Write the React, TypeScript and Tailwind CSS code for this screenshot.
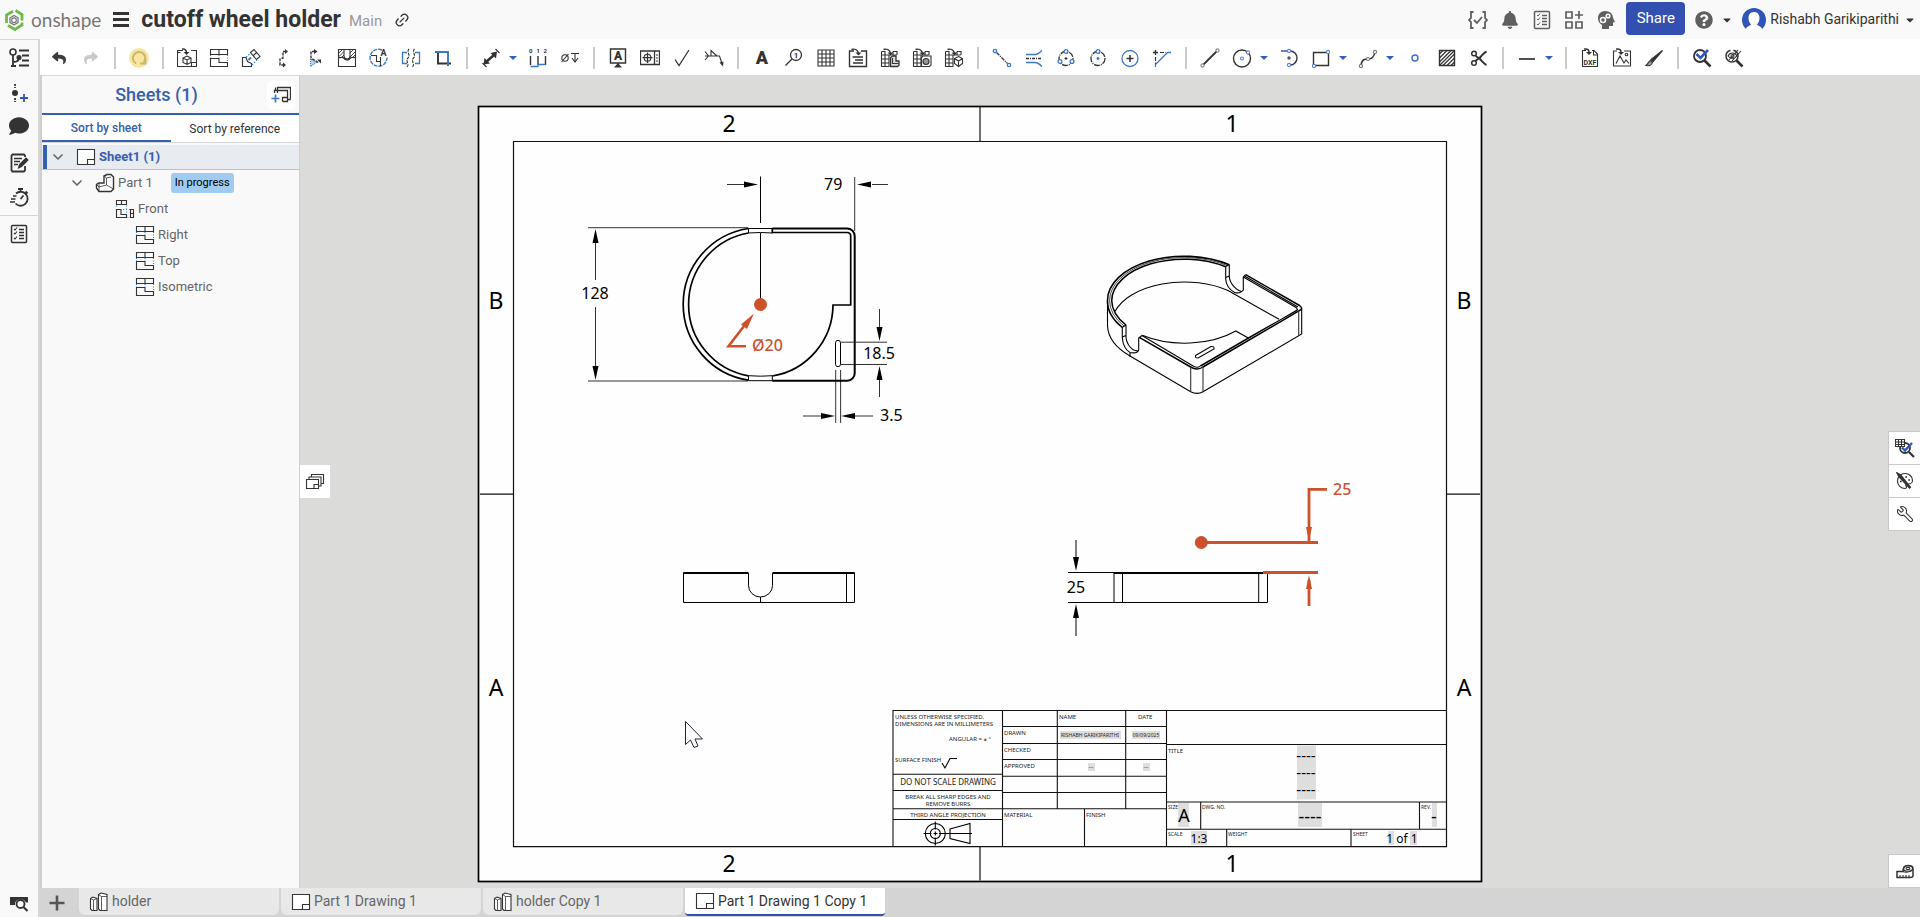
import type { ReactNode } from 'react';
import { FaBell, FaCaretDown, FaComment, FaQuestionCircle, FaReply, FaShare } from 'react-icons/fa';
import { ChevronDown, Link2, Palette, Wrench } from 'lucide-react';

const INK = '#333333';
const BLUE = '#3b78c4';
const ORANGE = '#cb522c';

/* ---------- icons ---------- */

function Icon({ children, className = 'size-5' }: { children: ReactNode; className?: string }) {
  return (
    <svg viewBox="0 0 20 20" className={className} fill="none" stroke={INK} strokeWidth="1.1" aria-hidden="true">
      {children}
    </svg>
  );
}

const projectedView = (
  <>
    <path d="M1.5 1.5h17v5h-17zM10 1.5v5M1.5 10.5H10v4h8.5v4h-17z" />
    <path d="M1.5 7v3M10 7v3M18.5 7v7" stroke={BLUE} strokeDasharray="1 1.5" />
  </>
);

const sheetIcon = (
  <>
    <path d="M1.5 2.5h17v15h-17z" fill="#fff" />
    <path d="M11.5 17.5v-5h7" />
  </>
);

const gridIcon = <path d="M2 2h16v16H2zM2 6h16M2 10h16M2 14h16M6 2v16M10 2v16M14 2v16" />;

const importArrow = <path d="M3.5 1.5c3-1 6 .5 7 3.5" strokeWidth="1.5" />;
const importHead = <path d="M7.5 4.5h6l-3 3z" fill={INK} stroke="none" />;

const tableImport = (
  <>
    <path d="M1.5 3.5v15h8M1.5 7h15M1.5 11h7M1.5 15h7M5 3.500v15M9 7v11M1.5 3.5h4M13 3.5h4v3.5M13 3.500v3.500" />
    {importArrow}
    {importHead}
  </>
);

const partStudio = (
  <>
    <path d="M1.5 6.5 4 5l4 1.5v12h-5l-1.5-1.5z" fill="#fff" />
    <path d="M4.5 8v10.5M1.5 6.5l3 1.5 3.500-1.5" strokeWidth=".8" />
    <path d="M9.5 2.5 12 1l6 1.5v16h-7L9.500 17z" fill="#fff" />
    <path d="m9.5 2.5 3 2h5.500M12.500 4.500v14" strokeWidth=".8" />
  </>
);

const checklist = (
  <>
    <rect x="2.5" y="1.5" width="15" height="17" rx="1" strokeWidth="1.5" />
    <path d="M10 5.5h5M10 8.5h5M10 11.5h5M10 14.5h5" strokeWidth="1.5" />
    <path d="m5 5 1 1 2-2.5M5 9l1 1 2-2.500M5 14l1 1 2-2.500" />
  </>
);

const magnifierCheck = (
  <>
    <circle cx="8" cy="8" r="6" strokeWidth="1.8" />
    <path d="m12.5 12.5 6 6" strokeWidth="2.6" />
    <path d="m4.5 6 4 4 7.500-8" stroke="#2f55c0" strokeWidth="2.6" />
  </>
);

type Tool = { id: string; label: string; icon: ReactNode; menu?: boolean };

const toolGroups: Tool[][] = [
  [
    { id: 'undo', label: 'Undo', icon: <FaReply className="size-[14px] text-[#3a3a3a]" /> },
    { id: 'redo', label: 'Redo', icon: <FaShare className="size-[14px] text-[#c9c9c9]" /> },
  ],
  [
    {
      id: 'update',
      label: 'Update views',
      icon: (
        <Icon>
          <circle cx="10" cy="10" r="10" fill="#f8e6a0" stroke="none" />
          <path d="M7 15.500A6.200 6.200 0 1 1 14.500 14.500" stroke="#c9b673" strokeWidth="2" />
          <path d="M11 15.500h5.500v-5" stroke="#c9b673" strokeWidth="1.8" />
        </Icon>
      ),
    },
  ],
  [
    {
      id: 'insert-view',
      label: 'Insert view',
      icon: (
        <Icon>
          <path d="M6 2.500H.5v16h19v-16H14M14.500 18.500v-4h5M.5 4.500h3" />
          <path d="M10 8l4 2v4.500l-4 2-4-2V10zM6 10l4 2 4-2M10 12v4.500" />
          <path d="M5 1c3-.5 4.500 1 4.500 4" strokeWidth="1.5" />
          <path d="M6.500 4h6L9.500 7z" fill={INK} stroke="none" />
        </Icon>
      ),
    },
    { id: 'projected', label: 'Projected view', icon: <Icon>{projectedView}</Icon> },
    {
      id: 'auxiliary',
      label: 'Auxiliary view',
      icon: (
        <Icon>
          <path d="M1.500 9.500v9h9v-3l-4-2-1.500-4zM9.500 4.500 13 1.500l6 7-3.500 3zM12.500 7.500l3-3" />
          <path d="m5 9 5-4M11 17l5-5" stroke={BLUE} strokeDasharray="1.5 1.5" />
          <path d="m7.500 12 2.500-2.500" stroke={BLUE} strokeWidth="2" />
        </Icon>
      ),
    },
    {
      id: 'section',
      label: 'Section view',
      icon: (
        <Icon>
          <path d="M13 3.500h-3V10l-3 1v6h4" strokeDasharray="3 1" strokeWidth="1.4" />
          <path d="m12 1 3 2.500-3 2.500zM10 14.500l3 2.500-3 2.500z" fill={INK} stroke="none" />
        </Icon>
      ),
    },
    {
      id: 'aligned-section',
      label: 'Aligned section view',
      icon: (
        <Icon>
          <path d="M10 3.500H6V10l8 5" strokeDasharray="3 1" strokeWidth="1.4" />
          <path d="m9 1 3.500 2.500L9 6zM12 11.500h4v4z" fill={INK} stroke="none" />
          <path d="M5.500 11v7.500l6-4z" fill={BLUE} fillOpacity=".35" stroke={BLUE} strokeDasharray="1 1" />
        </Icon>
      ),
    },
    {
      id: 'broken-out',
      label: 'Broken-out section view',
      icon: (
        <Icon>
          <path d="M1.500 1.500h17v17h-17z" />
          <path d="M7 1.500V8c0 4 6 4 6 0V1.500M1.500 9c2 2 3-1 5 1 2 3 5 3 7 0 2-2 3 1 5-1" />
          <path d="m2 5 3-3M2 8.500 7 3.500M4 10l3-3M13 5l3-3M13 9l5-5M15 10l3.500-3.500M8 12l1.500-1.500M11 12.500l2-2" strokeWidth=".9" />
        </Icon>
      ),
    },
    {
      id: 'detail',
      label: 'Detail view',
      icon: (
        <Icon>
          <path d="M13 2a8.500 8.500 0 1 0 5 7.500" stroke={BLUE} strokeWidth="1.4" strokeDasharray="4 1" />
          <path d="M2 7.500h5.500v6h4V18M11.500 9v5" />
          <text x="11.500" y="8" fontSize="9" fontWeight="700" fill={INK} stroke="none">A</text>
        </Icon>
      ),
    },
    {
      id: 'break',
      label: 'Break view',
      icon: (
        <Icon>
          <path d="M6 4.500H1.500v11H6M14 4.500h4.500v11H14" stroke={BLUE} strokeWidth="1.3" />
          <path d="M8 1c-3 3 2 6-1 9s2 6-1 9M13.500 1c-3 3 2 6-1 9s2 6-1 9" strokeDasharray="3 1" />
        </Icon>
      ),
    },
    {
      id: 'crop',
      label: 'Crop view',
      icon: (
        <Icon>
          <path d="M5 4v11.500h13" strokeWidth="1.9" />
          <path d="M2 4h13v14" stroke={BLUE} strokeWidth="1.9" />
        </Icon>
      ),
    },
  ],
  [
    {
      id: 'dimension',
      label: 'Dimension',
      menu: true,
      icon: (
        <Icon>
          <path d="m5 14 8-7" strokeWidth="2.6" />
          <path d="M2.500 16.500 3.500 10l5.500 5.500zM16 3.500 9.500 5l5.500 5.500z" fill={INK} stroke="none" />
          <path d="m1.500 15 4 4M14.500 1l4 4" />
        </Icon>
      ),
    },
    {
      id: 'ordinate',
      label: 'Ordinate dimension',
      icon: (
        <Icon>
          <path d="M2.500 8v9M10 8v9M17.500 8v9" strokeWidth="1.4" />
          <path d="M2.500 18.500H10v-2h7.500" stroke={BLUE} strokeWidth="1.3" />
          <g fontSize="6" fontWeight="700" fill={INK} stroke="none">
            <text x="1" y="5">0</text>
            <text x="8.500" y="5">1</text>
            <text x="15.500" y="5">2</text>
          </g>
        </Icon>
      ),
    },
    {
      id: 'hole',
      label: 'Hole callout',
      icon: (
        <Icon>
          <circle cx="5" cy="10" r="3.2" />
          <path d="m1.500 14 7-8M11 5.500h8M15 5.500v8" />
          <path d="m12 10 3 4 3-4" />
        </Icon>
      ),
    },
  ],
  [
    {
      id: 'note-datum',
      label: 'Datum',
      icon: (
        <Icon>
          <path d="M2.500 1h15v14h-15zM10 15v3" strokeWidth="1.4" />
          <path d="m10 15 4 4.500H6z" fill={INK} stroke="none" />
          <text x="10" y="12" fontSize="12" fontWeight="900" textAnchor="middle" fill={INK} stroke="none">A</text>
        </Icon>
      ),
    },
    {
      id: 'tolerance',
      label: 'Geometric tolerance',
      icon: (
        <Icon>
          <path d="M.5 3h19v13.500H.5zM14.500 3v13.500M2.500 9.700h10M7.500 4.500v10.500" strokeWidth="1.3" />
          <circle cx="7.500" cy="9.700" r="3.400" />
          <path d="M16 7h2M16 10h2M16 13h2" />
        </Icon>
      ),
    },
    { id: 'surface', label: 'Surface finish symbol', icon: <Icon><path d="m3 11.500 4 6L17 2" strokeWidth="1.3" /></Icon> },
    {
      id: 'weld',
      label: 'Weld symbol',
      icon: (
        <Icon>
          <path d="M1 8h14.500l3 9M1 3.500 4.500 8 1 12M7 8V2.500l6 5.500" />
          <path d="m15.500 14.500 4-1-.5 5z" fill={INK} stroke="none" />
        </Icon>
      ),
    },
  ],
  [
    { id: 'note', label: 'Note', icon: <Icon><text x="10" y="16" fontSize="18" fontWeight="900" textAnchor="middle" fill={INK} stroke="none">A</text></Icon> },
    {
      id: 'balloon',
      label: 'Callout',
      icon: (
        <Icon>
          <circle cx="12" cy="7" r="5.500" strokeWidth="1.3" />
          <path d="m8 11-6.500 6.500" strokeWidth="1.3" />
          <text x="12" y="10" fontSize="8" fontWeight="700" textAnchor="middle" fill={INK} stroke="none">1</text>
        </Icon>
      ),
    },
    { id: 'table', label: 'Table', icon: <Icon>{gridIcon}</Icon> },
    {
      id: 'bom',
      label: 'Bill of materials',
      icon: (
        <Icon>
          <path d="M6 3H1.500v15.500h17V3H13" strokeWidth="1.4" />
          <path d="M4.500 9h4M7 12h8M7 9h8M5 15h10" strokeWidth="1.7" />
          {importArrow}
          {importHead}
        </Icon>
      ),
    },
    {
      id: 'cutlist',
      label: 'Cut list',
      icon: (
        <Icon>
          {tableImport}
          <path d="M10.500 9.500 13 8h3v5h3v4.500l-1.500 1h-7z" fill="#ddd" strokeWidth="1.3" />
          <path d="M12.500 10v5.500h6" />
        </Icon>
      ),
    },
    {
      id: 'hole-table',
      label: 'Hole table',
      icon: (
        <Icon>
          {tableImport}
          <path d="M9.500 9.500 11 8h8v9l-1.500 1.500h-8z" fill="#fff" />
          <circle cx="14" cy="13.500" r="3" fill="#999" />
        </Icon>
      ),
    },
    {
      id: 'revision-table',
      label: 'Revision table',
      icon: (
        <Icon>
          {tableImport}
          <path d="m14.500 8.500 4 2v5l-4 3-4-3v-5zM10.500 10.500l4 2.500 4-2.500M14.500 13v5" fill="#fff" />
        </Icon>
      ),
    },
  ],
  [
    {
      id: 'centerline-points',
      label: 'Centerline between points',
      icon: (
        <Icon>
          <path d="m4.500 4.500 11 11" strokeDasharray="4 1 1 1" strokeWidth="1.3" />
          <g stroke={BLUE} strokeWidth="1.3"><circle cx="3" cy="3" r="1.7" /><circle cx="17" cy="17" r="1.7" /></g>
        </Icon>
      ),
    },
    {
      id: 'centerline-edges',
      label: 'Centerline between edges',
      icon: (
        <Icon>
          <path d="M2 10.500h16" strokeDasharray="3 1 1 1" strokeWidth="1.3" />
          <path d="M2 6.500h9c3 0 5-2 7-4M2 14.500h9c3 0 5 2 7 4" stroke={BLUE} strokeWidth="1.3" />
        </Icon>
      ),
    },
    {
      id: 'three-point',
      label: '3 point circular centerline',
      icon: (
        <Icon>
          <circle cx="10" cy="10.500" r="7" strokeWidth="1.3" strokeDasharray="6 1 1 1" />
          <path d="M8.500 10.500h3M10 9v3" />
          <g stroke={BLUE} strokeWidth="1.3" fill="#fff"><circle cx="10" cy="3.500" r="1.9" /><circle cx="4" cy="13.500" r="1.9" /><circle cx="16" cy="13.500" r="1.9" /></g>
        </Icon>
      ),
    },
    {
      id: 'two-point',
      label: '2 point circular centerline',
      icon: (
        <Icon>
          <circle cx="10" cy="10.500" r="7" strokeWidth="1.3" strokeDasharray="6 1 1 1" />
          <path d="M8.500 10.500h3M10 9v3" stroke={BLUE} strokeWidth="1.5" />
          <circle cx="10" cy="3.500" r="1.9" stroke={BLUE} strokeWidth="1.3" fill="#fff" />
        </Icon>
      ),
    },
    {
      id: 'centermark',
      label: 'Centermark',
      icon: (
        <Icon>
          <circle cx="10" cy="10.500" r="8" stroke={BLUE} strokeWidth="1.3" />
          <path d="M6.500 10.500h7M10 7v7" strokeWidth="1.5" />
        </Icon>
      ),
    },
    {
      id: 'virtual-sharp',
      label: 'Virtual sharp',
      icon: (
        <Icon>
          <path d="M1 4.500h5M3.500 2v5" strokeWidth="1.4" />
          <path d="M8 4.500h6M3.500 9v7" strokeDasharray="4 1.5" />
          <path d="M3.500 19v-2.500l12-12H19" stroke={BLUE} strokeWidth="1.3" />
        </Icon>
      ),
    },
  ],
  [
    {
      id: 'line',
      label: 'Line',
      icon: (
        <Icon>
          <path d="m3.500 16.500 13-13" strokeWidth="1.8" />
          <g fill="#fff" stroke="#888"><circle cx="2.500" cy="17.500" r="1.6" /><circle cx="17.500" cy="2.500" r="1.6" /></g>
        </Icon>
      ),
    },
    {
      id: 'circle',
      label: 'Circle',
      menu: true,
      icon: (
        <Icon>
          <circle cx="10" cy="10.500" r="8.500" strokeWidth="1.4" />
          <g stroke="#5a7fd6" fill="#fff"><circle cx="10" cy="10.500" r="1.5" /><circle cx="16" cy="4.500" r="1.6" /></g>
        </Icon>
      ),
    },
    {
      id: 'arc',
      label: 'Tangent arc',
      icon: (
        <Icon>
          <path d="M11 3a7 7 0 0 1 0 14" strokeWidth="1.4" />
          <path d="M2 3h7" stroke="#2f55c0" strokeWidth="1.5" />
          <circle cx="10" cy="10" r="1.7" fill="#555" stroke="none" />
          <g stroke="#5a7fd6" fill="#fff"><circle cx="10" cy="3" r="1.6" /><circle cx="10" cy="17" r="1.6" /></g>
        </Icon>
      ),
    },
    {
      id: 'rectangle',
      label: 'Corner rectangle',
      menu: true,
      icon: (
        <Icon>
          <path d="M2.500 4.500h15v13h-15z" strokeWidth="1.4" />
          <g stroke="#5a7fd6" fill="#fff"><circle cx="17" cy="4" r="1.6" /><circle cx="3" cy="18" r="1.6" /></g>
        </Icon>
      ),
    },
    {
      id: 'spline',
      label: 'Spline',
      menu: true,
      icon: (
        <Icon>
          <path d="M3 17c1-6 4-6 7-6s6-1 7-7" strokeWidth="1.5" />
          <g fill="#fff" stroke="#777"><circle cx="3" cy="18" r="1.6" /><circle cx="10" cy="11" r="1.5" /><circle cx="17" cy="4" r="1.6" /></g>
        </Icon>
      ),
    },
    { id: 'point', label: 'Point', icon: <Icon><circle cx="10" cy="10" r="3" stroke="#3f6bc9" strokeWidth="1.4" /></Icon> },
    {
      id: 'hatch',
      label: 'Hatch',
      icon: (
        <Icon>
          <path d="M2.500 2.500h15v15h-15z" strokeWidth="1.4" />
          <path d="m2.500 6 3.500-3.500M2.500 10l7.500-7.500M2.500 14 14 2.500M2.500 17.500l15-15M6 17.500 17.500 6M10 17.500l7.500-7.500M14 17.500l3.500-3.500" strokeWidth="1.2" />
        </Icon>
      ),
    },
    {
      id: 'trim',
      label: 'Trim',
      icon: (
        <Icon>
          <path d="M6.500 7.500c1.500 2 3 2 4.500 3.500 2 2 4 5 6.500 6M6.500 13c1.500-2 3-2 4.500-3.500 2-2 4-5 6.500-6" strokeWidth="2" />
          <circle cx="5" cy="5.500" r="2.300" strokeWidth="1.5" />
          <circle cx="5" cy="15" r="2.300" strokeWidth="1.5" />
        </Icon>
      ),
    },
  ],
  [{ id: 'line-style', label: 'Line style', menu: true, icon: <Icon><path d="M2 11h16" strokeWidth="1.7" /></Icon> }],
  [
    {
      id: 'dxf',
      label: 'Insert DXF',
      icon: (
        <Icon>
          <path d="M6 2.500H2.500v16h15V6L14 2.500h-2M13.500 2.500V7h4" />
          <path d="M4 1c4-.5 5 1 5 3" strokeWidth="1.5" />
          <path d="M6 4h6L9 7z" fill={INK} stroke="none" />
          <text x="10" y="17" fontSize="7" fontWeight="700" textAnchor="middle" fill={INK} stroke="none">DXF</text>
        </Icon>
      ),
    },
    {
      id: 'image',
      label: 'Insert image',
      icon: (
        <Icon>
          <path d="M5 3H1.500v15h17V3H12M4 15.500 8 8l4 7 2-3 3 3.500" />
          <circle cx="14.500" cy="6.500" r="1.3" />
          <path d="M4 1c4-.5 5 1 5 3" strokeWidth="1.5" />
          <path d="M6 4h6L9 7z" fill={INK} stroke="none" />
        </Icon>
      ),
    },
    {
      id: 'format',
      label: 'Format painter',
      icon: (
        <Icon>
          <path d="M18.500 2.500 9 13.500 7 11.500z" fill={INK} strokeWidth="1.2" />
          <path d="M6.500 12.500c-2 .5-2 3-4.500 5 3 .5 6-.5 6.500-3z" fill="#999" />
        </Icon>
      ),
    },
  ],
  [
    { id: 'inspect', label: 'Show dangling annotations', icon: <Icon>{magnifierCheck}</Icon> },
    {
      id: 'hide',
      label: 'Hide annotations',
      icon: (
        <Icon>
          <circle cx="8" cy="8" r="6" strokeWidth="1.5" strokeDasharray="26 3" />
          <path d="m12.500 12.500 6 6" strokeWidth="2.6" />
          <path d="M4 8c2-4 7-4 9 0-2 3-7 3-9 0zM5 12 14 2M8 13l9-10" />
          <circle cx="8.500" cy="8" r="1.5" />
        </Icon>
      ),
    },
  ],
];

/* ---------- header and bars ---------- */

function Header() {
  return (
    <header className="flex h-[39px] shrink-0 items-center bg-[#f9f9f9] pr-1 pl-1 text-[#333]">
      <a href="#home" aria-label="onshape" className="flex items-center gap-[7px] text-[#757575]">
        <svg viewBox="0 0 20 22" className="h-[22px] w-5" fill="none" aria-hidden="true">
          <path d="M9 2.200 2.500 6v8M11.500 1.500 18 5.500v6M18 13.500V16l-7 4.500-7-4" stroke="#6cbb45" strokeWidth="2.8" />
          <path d="m10 6.500 4 2.300v4.700l-4 2.300-4-2.300V8.800z" stroke="#777" strokeWidth="1.3" />
          <circle cx="10" cy="11.200" r="2.300" stroke="#777" strokeWidth="1.1" />
        </svg>
        <span className="font-[Lato] text-[19px] leading-6">onshape</span>
      </a>
      <button aria-label="Document menu" className="ml-3 flex w-4 flex-col gap-[3px]">
        <span className="h-[3px] bg-[#333]" />
        <span className="h-[3px] bg-[#333]" />
        <span className="h-[3px] bg-[#333]" />
      </button>
      <h1 className="ml-3 text-[23px] leading-6 font-bold">cutoff wheel holder</h1>
      <span className="ml-2 pt-1 text-[15px] text-[#999]">Main</span>
      <button aria-label="Copy link" className="ml-3">
        <Link2 className="size-4 -rotate-45" />
      </button>

      <div className="ml-auto flex items-center">
        <button aria-label="Custom features" className="flex w-8 justify-center">
          <svg viewBox="0 0 20 20" className="size-5" fill="none" stroke="#5f5f5f" strokeWidth="1.8" aria-hidden="true">
            <path d="M5.500 2H3v6l-2 2 2 2v6h2.500M14.500 2H17v6l2 2-2 2v6h-2.500M6 10l3 3 5-6" />
          </svg>
        </button>
        <button aria-label="Notifications" className="flex w-8 justify-center">
          <FaBell className="size-[18px] text-[#5f5f5f]" />
        </button>
        <button aria-label="Action items" className="flex w-8 justify-center">
          <svg viewBox="0 0 20 20" className="size-5" fill="none" stroke="#5f5f5f" aria-hidden="true">
            <rect x="2.500" y="1.500" width="15" height="17" rx="1" strokeWidth="1.5" />
            <path d="M10 5.500h5M10 8.500h5M10 11.500h5M10 14.500h5" strokeWidth="1.5" />
            <path d="m5 5 1 1 2-2.500M5 9l1 1 2-2.500M5 14l1 1 2-2.500" />
          </svg>
        </button>
        <button aria-label="App store" className="flex w-8 justify-center">
          <svg viewBox="0 0 20 20" className="size-5" fill="none" stroke="#5f5f5f" strokeWidth="1.7" aria-hidden="true">
            <path d="M2 2h6v6H2zM2 12h6v6H2zM12 12h6v6h-6zM15 1v8M11 5h8" />
          </svg>
        </button>
        <button aria-label="Learning center" className="flex w-8 justify-center">
          <svg viewBox="0 0 20 20" className="size-5" aria-hidden="true">
            <path d="M9 1c5 0 8 3 8 7l2 4-2 .5V16h-4v3H6v-4c-3-2-4-4-4-7 0-4 3-7 7-7z" fill="#5f5f5f" />
            <g fill="none" stroke="#f9f9f9" strokeWidth="1.6">
              <circle cx="7" cy="10" r="2.500" />
              <circle cx="12" cy="6" r="1.800" />
            </g>
          </svg>
        </button>
        <button className="mb-[2px] ml-1 h-[33px] w-[59px] rounded-[4px] bg-[#3350b0] text-[15px] text-white">Share</button>
        <button aria-label="Help" className="ml-[10px] flex items-center gap-2">
          <FaQuestionCircle className="size-[18px] text-[#5f5f5f]" />
          <FaCaretDown className="size-3" />
        </button>
        <button className="ml-[9px] flex items-center">
          <svg viewBox="0 0 24 24" className="size-6" aria-hidden="true">
            <circle cx="12" cy="12" r="12" fill="#2f55b8" />
            <path d="M12 4c4 0 5.500 3 5.500 6 0 3-1 5-2.500 6.500 0 1 4 1.500 5 4V24H4v-3.500c1-2.500 5-3 5-4C7.500 15 6.500 13 6.500 10c0-3 1.500-6 5.500-6z" fill="#fff" />
          </svg>
          <span className="ml-1 text-[14px]">Rishabh Garikiparithi</span>
          <FaCaretDown className="ml-[5px] size-3" />
        </button>
      </div>
    </header>
  );
}

function Toolbar() {
  return (
    <div role="toolbar" className="flex h-9 shrink-0 items-center bg-white pt-[2px] pl-[3px]">
      {toolGroups.map((group, i) => (
        <div key={group[0].id} className="flex items-center">
          {i > 0 && (
            <span className="flex w-4 justify-center">
              <span className="h-[22px] w-[2px] bg-[#cccccc]" />
            </span>
          )}
          {group.map((tool) => (
            <div key={tool.id} className="flex items-center">
              <button aria-label={tool.label} className="flex h-8 w-8 items-center justify-center">
                {tool.icon}
              </button>
              {tool.menu && (
                <button aria-label={`${tool.label} options`} className="flex w-[15px] justify-start">
                  <svg viewBox="0 0 8 4" className="ml-[2px] h-1 w-2" aria-hidden="true">
                    <path d="M0 0h8L4 4z" fill="#3560b8" />
                  </svg>
                </button>
              )}
            </div>
          ))}
        </div>
      ))}
    </div>
  );
}

function LeftRail() {
  return (
    <nav className="flex w-10 shrink-0 flex-col items-center border-t border-r-2 border-t-[#d8d8d8] border-r-[#d5d5d5] bg-[#f9f9f9]">
      <button aria-label="Versions" className="flex h-[35px] items-center">
        <Icon>
          <circle cx="4" cy="4" r="3" strokeWidth="1.6" />
          <path d="M4 7v11M4 14c4 0 6-1 6-4M2 18h5" strokeWidth="1.8" />
          <circle cx="10" cy="9.500" r="2" fill={INK} />
          <path d="M10 2.500h10M13 7.500h7M13 12.500h7M10 17.500h10" strokeWidth="1.8" />
        </Icon>
      </button>
      <button aria-label="Create version" className="flex h-[35px] items-center">
        <Icon>
          <path d="M6 1v4M6 15v4" strokeWidth="1.8" strokeDasharray="2 1" />
          <circle cx="6" cy="10" r="3" fill={INK} stroke="none" />
          <path d="M11 15h8M15 11v8" stroke="#2f55b8" strokeWidth="1.8" />
        </Icon>
      </button>
      <button aria-label="Comments" className="flex h-[35px] items-center pb-1">
        <FaComment className="size-5 text-[#333]" />
      </button>
      <button aria-label="Notes" className="flex h-[35px] items-center">
        <Icon>
          <path d="M16 4V2.500L15 1.500H3.500l-1 1v15l1 1H15l1-1V13" strokeWidth="1.8" />
          <path d="M5 5.500h8M5 8.500h6M5 11.500h4" strokeWidth="1.5" />
          <path d="m9.500 15 1-3.500L17 5l2 2-6.500 6.500z" fill={INK} />
        </Icon>
      </button>
      <button aria-label="Performance" className="flex h-[35px] items-center">
        <Icon>
          <path d="M7 5.500a7 7 0 1 1-.5 10M11.500 1v3M9 1h5M16.500 3.500l2 2M11.500 11l3-3.500" strokeWidth="1.8" />
          <path d="M4 8h3.500M2 11h4.500M1 14h5" strokeWidth="1.4" />
        </Icon>
      </button>
      <div className="h-px w-full bg-[#d5d5d5]" />
      <button aria-label="Properties" className="flex h-9 items-center">
        <Icon>{checklist}</Icon>
      </button>
      <button aria-label="Search tabs" className="mt-auto flex h-7 items-center">
        <Icon>
          <path d="M1 4h18v5.500h-2A6 6 0 0 0 6 10v2H1z" fill={INK} stroke="none" />
          <circle cx="11.500" cy="11" r="4" strokeWidth="1.8" fill="#f9f9f9" />
          <path d="m14.500 14 4 4" strokeWidth="2.2" />
        </Icon>
      </button>
    </nav>
  );
}

/* ---------- sheets panel ---------- */

const projectedViews = ['Right', 'Top', 'Isometric'];

function SheetsPanel() {
  return (
    <aside className="flex w-[260px] shrink-0 flex-col border-r border-l-2 border-[#cfcfcf] bg-[#f9f9f9]">
      <div className="flex h-10 items-center border-t border-b-2 border-t-[#d8d8d8] border-b-[#3560ad] pr-1 pl-1">
        <h2 className="flex-1 text-center text-[18px] font-medium text-[#3560ad]">Sheets (1)</h2>
        <button aria-label="Add sheet" className="flex size-7 items-center justify-center rounded-[4px] bg-white">
          <Icon>
            <path d="M6.500 8V2.500h13v12M3.500 8V5.500h13v11h-5M11.500 16.500v-4h5M16.500 14.500h3M4.500 5.500v-3" strokeWidth="1.3" />
            <path d="M.5 13.500h8M4.500 9.500v8" stroke={BLUE} strokeWidth="1.7" />
          </Icon>
        </button>
      </div>
      <div role="tablist" className="flex h-7 border-b border-[#d5d5d5] bg-white text-[12px]">
        <button role="tab" aria-selected="true" className="flex-1 border-b-2 border-[#3560ad] font-medium text-[#3560ad]">
          Sort by sheet
        </button>
        <button role="tab" aria-selected="false" className="flex-1">
          Sort by reference
        </button>
      </div>
      <ul className="flex flex-col pt-[2px] text-[13px] text-[#666]">
        <li className="flex h-[25px] items-center border-b border-[#9bcbf0] bg-[#e8ebf0]">
          <span className="ml-px h-6 w-1 bg-[#3560ad]" />
          <button aria-label="Collapse Sheet1" className="ml-[3px] flex w-4 justify-center">
            <ChevronDown className="size-4" strokeWidth={2.5} />
          </button>
          <button className="ml-[10px] flex items-center gap-[3px] font-bold text-[#3560ad]">
            <Icon>{sheetIcon}</Icon>
            Sheet1 (1)
          </button>
        </li>
        <li className="flex h-[26px] items-center pl-[27px]">
          <button aria-label="Collapse Part 1" className="flex w-4 justify-center">
            <ChevronDown className="size-4" strokeWidth={2.5} />
          </button>
          <button className="ml-[10px] flex items-center gap-[3px]">
            <Icon>
              <path d="m9 3 3-1.500h4L18.500 4v12L16 18.500H4L1.500 15v-3.500L4 10h5z" fill="#fff" strokeWidth="1.4" />
              <path d="m9 3 2.500 2v7L18.500 16M4 10l0 4 7.500-2M1.500 11.500 4 14v4.500M11.500 5 16 4" strokeWidth=".8" />
            </Icon>
            Part 1
          </button>
          <span className="ml-[18px] rounded-[3px] bg-[#9fcbf0] px-1 text-[11px] leading-5 text-black">In progress</span>
        </li>
        <li className="flex h-[26px] items-center pl-[73px]">
          <button className="flex items-center gap-[3px]">
            <Icon>
              <path d="M1.500 1.500h10v4h-10zM6.500 1.500v4M1.500 10.500H6v5h5.500v3h-10zM15.500 10.500h3v8h-3zM15.500 14.500h3" />
              <path d="M1.500 6.500v3M11.500 6.500v7M12.500 18.500h2M8 10.500h7" stroke={BLUE} strokeDasharray="1 2" />
            </Icon>
            Front
          </button>
        </li>
        {projectedViews.map((name) => (
          <li key={name} className="flex h-[26px] items-center pl-[93px]">
            <button className="flex items-center gap-[3px]">
              <Icon>{projectedView}</Icon>
              {name}
            </button>
          </li>
        ))}
      </ul>
    </aside>
  );
}

/* ---------- drawing sheet ---------- */

const HEADS = {
  right: '-14,-3 0,0 -14,3',
  left: '14,-3 0,0 14,3',
  up: '-3,14 0,0 3,14',
  down: '-3,-14 0,0 3,-14',
};

function Head({ x, y, dir, fill = '#000' }: { x: number; y: number; dir: keyof typeof HEADS; fill?: string }) {
  return <polygon points={HEADS[dir]} transform={`translate(${x} ${y})`} fill={fill} stroke="none" />;
}

function FrontView() {
  return (
    <g>
      <g strokeWidth="1" stroke="#333">
        <path d="M760.500 176.500V223M760.500 233V298" stroke="#000" />
        <path d="M727 184.500h20M872 184.500h16M854.700 177v54" />
        <path d="M588 227.700h160M588 381h160M595.500 242v38M595.500 307v60" />
        <path d="M841 342.200h46M841 364.500h46M879.500 309v20M879.500 378v19" />
        <path d="M835.700 370v53M840.600 370v53M803 416h20M854 416h19" />
      </g>
      <Head x={758} y={184.5} dir="right" />
      <Head x={857} y={184.5} dir="left" />
      <Head x={595.5} y={229} dir="up" />
      <Head x={595.5} y={380} dir="down" />
      <Head x={879.5} y={341} dir="down" />
      <Head x={879.5} y={366} dir="up" />
      <Head x={835} y={416} dir="right" />
      <Head x={841} y={416} dir="left" />

      <g strokeWidth="1.2">
        <path d="M748.500 228.500A76.700 76.700 0 0 0 748.500 380.200" strokeWidth="1.7" />
        <path d="M748.500 233A72.500 72.500 0 0 0 748.500 375.800" strokeWidth="1.7" />
        <path d="M748.500 228.500v4.500q12-1 23.800 0M748.500 228.500h24M748.500 380.700v-5q12 1 23.800 0v5M748.500 380.700h24" strokeWidth="1" />
        <path d="M772.300 228.500H847a7.500 7.500 0 0 1 7.700 7.500V373a7.500 7.500 0 0 1-7.700 7.700H772.300" strokeWidth="2" />
        <path d="M772.300 228.500v4H847a3.500 3.500 0 0 1 3.700 3.500V305H833A72.500 72.500 0 0 1 772.300 376" strokeWidth="1.7" />
        <rect x="835.500" y="340.300" width="5" height="26.400" rx="2.500" strokeWidth="1" />
      </g>

      <g stroke={ORANGE} fill={ORANGE}>
        <circle cx="760.500" cy="304.500" r="6.500" stroke="none" />
        <path d="M746 346.300H728.500L746 323.500" fill="none" strokeWidth="2.6" />
        <path d="M754 313.500 747 329l-6-4.500z" stroke="none" />
      </g>
      <g className="text-[16px]" fill="#000" stroke="none">
        <text x="824" y="190">79</text>
        <text x="595" y="299" textAnchor="middle">128</text>
        <text x="879" y="359" textAnchor="middle">18.5</text>
        <text x="880" y="421">3.5</text>
        <text x="752" y="351" fill={ORANGE} fontWeight="500">Ø20</text>
      </g>
    </g>
  );
}

function IsometricView() {
  return (
    <g strokeWidth="1.1">
      {/* curved wall rim */}
      <path d="M1122.300 327.300A76.500 44.200 0 0 1 1107.500 300.700A76.500 44.200 0 0 1 1229.300 264.800" strokeWidth="1.6" />
      <path d="M1124 326A74.400 43 0 0 1 1109.600 300.700A74.400 43 0 0 1 1227.500 265.700" strokeWidth=".7" />
      <path d="M1126 325A72.300 41.700 0 0 1 1111.700 300.700A72.300 41.700 0 0 1 1225.700 266.800" strokeWidth="1.5" />
      <path d="M1107.500 301V326A76.500 44.200 0 0 0 1130 356L1190.700 391.700Q1197 395 1203 391.700L1301.700 334V308.300" />
      {/* floor */}
      <path d="M1115 311.500A72.300 41.700 0 0 1 1228 290.500L1279 319.300" />
      {/* rear notch */}
      <path d="M1229.300 264.500 1225.700 266.500V279C1226 285 1230 290 1235 292.700M1229.300 264.500V277C1230 284 1237 291 1242 291.500M1235 292.700Q1241 293.500 1243.300 290V277L1245.700 274.700M1225.700 277.500l3.600-1.500" />
      {/* straight walls */}
      <path d="M1245.700 274.700 1299.500 305.500Q1303 308 1300.500 310L1203 367Q1197 371 1190.700 367L1139.300 337.300" strokeWidth="1.5" />
      <path d="M1243.300 277 1296 307.500Q1298.500 309.500 1296 311L1248 338M1244.500 276 1298 307M1201 366 1298 309.500M1200 366.500Q1197 368 1194 366.500L1142.300 335.800M1248 338 1200 366" />
      <path d="M1190.700 367V391.700M1203 367V391.700M1298.700 311V336" stroke="#333" />
      {/* front notch */}
      <path d="M1126 325 1122.300 327.300V338C1123 346 1126 350 1130 352.500M1126 325V336C1126 344 1132 351 1137.500 350.800M1130 352.500Q1137 354 1138.700 350V338L1142.300 335.300M1122.300 337l3.700-1.500M1130 352.500v4" />
      {/* top plate */}
      <path d="M1142.300 335.300A72.300 41.700 0 0 0 1235.700 331L1248.300 338" />
      <path d="M1195.500 355.500 1211 346.500Q1214.500 346 1214 349L1198.500 357.800Q1195 358.500 1195.500 355.500z" />
    </g>
  );
}

function RightView() {
  return (
    <g strokeWidth="1">
      <path d="M683.500 573h65M772.500 573h82" strokeWidth="2" />
      <path d="M683.500 572.500v30h171v-30M846.500 573v29M748.500 573v12.500a12 11.500 0 0 0 24 0V573M760.500 597v5" />
    </g>
  );
}

function TopView() {
  return (
    <g strokeWidth="1">
      <path d="M1114 573h153" strokeWidth="2" />
      <path d="M1068 572.500h46M1068 602.500h199.500v-30M1114 573v29M1122.500 573v29M1258.700 573v29" />
      <path d="M1076 540v20M1076 615v21" />
      <Head x={1076} y={571} dir="down" />
      <Head x={1076} y={604} dir="up" />
      <g stroke={ORANGE} strokeWidth="2.8">
        <circle cx="1201.300" cy="542.500" r="6.500" fill={ORANGE} stroke="none" />
        <path d="M1201 542.500h117M1263 572.500h55M1327 489.300h-18V541M1309 606V580" />
        <Head x={1309} y={541} dir="down" fill={ORANGE} />
        <Head x={1309} y={575} dir="up" fill={ORANGE} />
      </g>
      <g className="text-[16px]" fill="#000" stroke="none">
        <text x="1076" y="593" textAnchor="middle">25</text>
        <text x="1333" y="495" fill={ORANGE} fontWeight="500">25</text>
      </g>
    </g>
  );
}

function TitleBlock() {
  return (
    <g stroke="none" fill="#222">
      <path
        fill="none"
        stroke="#111"
        strokeWidth="1.1"
        d="M893 846.700V710.500H1446.800M1002.500 710.500v136M1057.300 710.500v98M1125.700 710.500v98M1166.500 710.500v136M893 774.300h109.500M893 790.500h109.500M893 819.500h109.500M893 808.700h273.500M1002.500 726.500h164M1002.500 743.500h164M1002.500 759.500h164M1002.500 776.300h164M1002.500 792.500h164M1084.500 808.700v38M1166.500 744.500h280M1166.500 802h280M1166.500 829.300h280M1200.700 802v27M1419.500 802v27M1226.700 829.300v17.500M1351 829.300v17.500"
      />
      <path
        fill="#dedede"
        d="M1060 731h61v8h-61zM1132 731h28v8h-28zM1088 763h7v8h-7zM1143 763h7v8h-7zM1297 745.500h19v54h-19zM1298 803h24v24h-24zM1178 803h11v24h-11zM1432 803h5v24h-5zM1191 831h16v14h-16zM1388 831h6v14h-6zM1410 831h7v14h-7z"
      />
      <g className="text-[6px]">
        <text x="895" y="719">UNLESS OTHERWISE SPECIFIED,</text>
        <text x="895" y="726">DIMENSIONS ARE IN MILLIMETERS</text>
        <text x="949" y="741">ANGULAR = ± °</text>
        <text x="895" y="762">SURFACE FINISH</text>
        <text x="948" y="799" textAnchor="middle">BREAK ALL SHARP EDGES AND</text>
        <text x="948" y="806" textAnchor="middle">REMOVE BURRS</text>
        <text x="948" y="817" textAnchor="middle">THIRD ANGLE PROJECTION</text>
        <text x="1004" y="817">MATERIAL</text>
        <text x="1086" y="817">FINISH</text>
        <text x="1059" y="719">NAME</text>
        <text x="1138" y="719">DATE</text>
        <text x="1004" y="735">DRAWN</text>
        <text x="1004" y="752">CHECKED</text>
        <text x="1004" y="768">APPROVED</text>
        <text x="1168" y="753">TITLE</text>
      </g>
      <g className="text-[5px]">
        <text x="1090" y="737" textAnchor="middle">RISHABH GARIKIPARITHI</text>
        <text x="1146" y="737" textAnchor="middle">09/09/2025</text>
        <text x="1091" y="769" textAnchor="middle">---</text>
        <text x="1146" y="769" textAnchor="middle">---</text>
        <text x="1168" y="809">SIZE</text>
        <text x="1202" y="809">DWG. NO.</text>
        <text x="1421" y="809">REV.</text>
        <text x="1168" y="836">SCALE</text>
        <text x="1228" y="836">WEIGHT</text>
        <text x="1353" y="836">SHEET</text>
      </g>
      <text x="948" y="785" textAnchor="middle" className="text-[8px]">DO NOT SCALE DRAWING</text>
      <g fill="#000" textAnchor="middle">
        <g className="text-[15px]">
          <text x="1306" y="761">----</text>
          <text x="1306" y="778">----</text>
          <text x="1306" y="795">----</text>
        </g>
        <g className="text-[18px]">
          <text x="1184" y="822">A</text>
          <text x="1310" y="823">----</text>
          <text x="1434" y="823">-</text>
        </g>
        <g className="text-[12px]">
          <text x="1199" y="843">1:3</text>
          <text x="1402" y="843">1 of 1</text>
        </g>
      </g>
      <g fill="none" stroke="#000" strokeWidth="1.1">
        <path d="m942 763 3 5 5-9.500h7" />
        <circle cx="935.300" cy="833.500" r="10" />
        <circle cx="935.300" cy="833.500" r="5" />
        <path d="M923.500 833.500h8M939 833.500h8M933.500 833.500h4M935.300 821.500v8M935.300 837.500v8M935.300 831.500v4M950 829l20-5.500v20L950 838.500zM947 833.500h25" />
      </g>
    </g>
  );
}

function DrawingSheet() {
  return (
    <svg
      viewBox="477 105 1007 779"
      className="h-[779px] w-[1007px] shrink-0 font-['Noto_Sans',sans-serif]"
      fill="none"
      stroke="#000"
      strokeWidth="1"
      role="img"
      aria-label="Part 1 drawing"
    >
      <rect x="478.500" y="106.500" width="1003" height="775" fill="#fefefe" strokeWidth="1.7" />
      <path d="M513.500 141.500H1446.500V846.700H513.500zM980 107v34.500M980 847v33.500M480 494.200h33M1447 494.200h33" stroke="#111" strokeWidth="1.2" />
      <g className="text-[23px]" fill="#000" stroke="none" textAnchor="middle">
        <text x="729" y="132">2</text>
        <text x="1232" y="132">1</text>
        <text x="729" y="872">2</text>
        <text x="1232" y="872">1</text>
        <text x="496" y="309">B</text>
        <text x="1464" y="309">B</text>
        <text x="496" y="696">A</text>
        <text x="1464" y="696">A</text>
      </g>
      <FrontView />
      <IsometricView />
      <RightView />
      <TopView />
      <TitleBlock />
      <path d="M685.500 721.500v23l5-4.500 3.500 7.500 4-1.500-3-7h7.500z" fill="#fff" stroke="#223" />
    </svg>
  );
}

function CanvasArea() {
  const sideButton = 'flex h-[33px] w-[31px] items-center justify-center border-b border-[#c8c8c8] bg-white';
  return (
    <main className="relative min-w-0 flex-1 overflow-hidden bg-[#dbdbda] pt-[30px] pl-[177px]">
      <DrawingSheet />
      <button aria-label="Sheet list" className="absolute top-[390px] left-0 flex h-[33px] w-[30px] items-center justify-center bg-white">
        <Icon>
          <path d="M1.500 7.500h12v9h-12zM4 7.500v-2.500h12v9h-2.500M6.500 5V2.500h12v9H16M9 16.500v-4h4.500" />
        </Icon>
      </button>
      <div className="absolute top-[356px] right-0 flex flex-col border-t border-l border-[#c8c8c8]">
        <button aria-label="Inspection table" className={sideButton}>
          <Icon>
            <circle cx="10" cy="10" r="5" strokeWidth="1.8" />
            <path d="m14 14 5 5" strokeWidth="2.2" />
            <path d="M.5 1.500h9v7h-9zM.5 4h9M.5 6.500h9M3.500 1.500v7M6.500 1.500v7" fill="#fff" />
            <path d="m7 9.500 3 3 7-7.500" stroke="#2f55c0" strokeWidth="2.4" />
          </Icon>
        </button>
        <button aria-label="Styles" className={sideButton}>
          <span className="relative flex">
            <Palette className="size-[18px] text-[#333]" strokeWidth={1.5} />
            <svg viewBox="0 0 20 20" className="absolute inset-0 size-[18px]" aria-hidden="true">
              <path d="m1 1 4 2 11 14-1 1L3 5z" fill={INK} stroke={INK} strokeWidth="1.4" />
            </svg>
          </span>
        </button>
        <button aria-label="Drawing properties" className={sideButton}>
          <Wrench className="size-[18px] -scale-x-100 text-[#333]" strokeWidth={1.4} />
        </button>
      </div>
      <button aria-label="Measure" className="absolute right-0 bottom-0 flex h-[34px] w-8 items-center justify-center border border-r-0 border-[#c8c8c8] bg-white">
        <Icon>
          <path d="M2 10.500h6c0-2 0-6 5-6 4 0 5 1.500 5 3v7c0 1.500-1 2-3 2H2z" strokeWidth="1.5" />
          <ellipse cx="13" cy="7.500" rx="4.500" ry="2.700" />
          <ellipse cx="13" cy="7.500" rx="2" ry="1.100" />
          <path d="M8 10.500c2 1 8 1 10-2M5 16v-2M8 16v-2M11 16v-2M14 16v-2" />
        </Icon>
      </button>
    </main>
  );
}

/* ---------- bottom tabs ---------- */

const documentTabs = [
  { name: 'holder', icon: partStudio },
  { name: 'Part 1 Drawing 1', icon: sheetIcon },
  { name: 'holder Copy 1', icon: partStudio },
  { name: 'Part 1 Drawing 1 Copy 1', icon: sheetIcon, active: true },
];

function TabBar() {
  return (
    <footer className="flex h-[29px] shrink-0 items-start gap-[2px] bg-[#d4d4d4] text-[14px] text-[#666]">
      <button aria-label="Add tab" className="flex h-[29px] w-[37px] items-center justify-center pr-1">
        <svg viewBox="0 0 16 16" className="size-4" aria-hidden="true">
          <path d="M8 .5v15M.5 8h15" stroke="#555" strokeWidth="2.6" />
        </svg>
      </button>
      {documentTabs.map((tab) => (
        <button
          key={tab.name}
          className={
            tab.active
              ? 'flex h-7 w-[200px] items-center gap-[3px] rounded-b-[4px] border-b-2 border-[#3350b0] bg-white px-[10px] whitespace-nowrap text-[#333]'
              : 'flex h-[27px] w-[200px] items-center gap-[3px] rounded-b-[6px] bg-[#e8e8e8] px-[10px] whitespace-nowrap'
          }
        >
          <Icon>{tab.icon}</Icon>
          {tab.name}
        </button>
      ))}
    </footer>
  );
}

export default function App() {
  return (
    <div className="flex h-screen flex-col overflow-hidden bg-[#f9f9f9] font-[Roboto,sans-serif] text-[#333]">
      <Header />
      <div className="flex min-h-0 flex-1">
        <LeftRail />
        <div className="flex min-w-0 flex-1 flex-col">
          <Toolbar />
          <div className="flex min-h-0 flex-1">
            <SheetsPanel />
            <CanvasArea />
          </div>
          <TabBar />
        </div>
      </div>
    </div>
  );
}
